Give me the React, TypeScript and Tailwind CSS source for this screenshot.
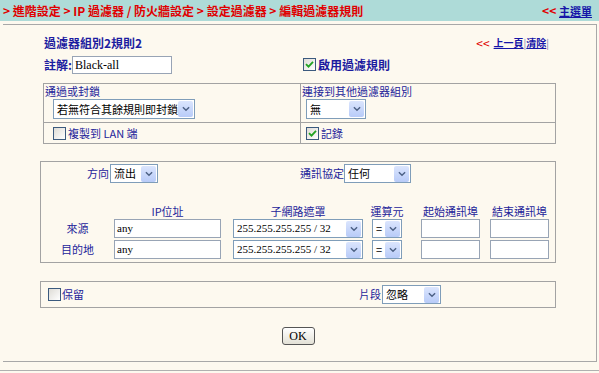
import type { ReactNode } from "react";

const CJK = "font-['Noto_Sans_CJK_TC','Noto_Sans',sans-serif]";
const SERIF = "font-['Liberation_Serif',serif]";

function Check({ checked }: { checked?: boolean }) {
  return (
    <span className="inline-flex h-[13px] w-[13px] shrink-0 items-center justify-center border border-[#3b5a7e] bg-gradient-to-br from-[#dedcd6] to-white">
      {checked && (
        <svg viewBox="0 0 9 9" className="h-[9px] w-[9px]">
          <path d="M1 4.2 L3.5 6.7 L8 1.8" stroke="#22a322" strokeWidth="1.8" fill="none" />
        </svg>
      )}
    </span>
  );
}

function Arrow() {
  return (
    <span className="ml-auto flex h-[16px] w-[15px] shrink-0 items-center justify-center rounded-[2px] bg-gradient-to-b from-[#dbe5fd] to-[#b8cbf8]">
      <svg viewBox="0 0 9 6" className="h-[6px] w-[8px]">
        <path d="M1 1 L4.5 4.5 L8 1" stroke="#4d6185" strokeWidth="1.6" fill="none" />
      </svg>
    </span>
  );
}

function Select({ className, children, serif }: { className: string; children: ReactNode; serif?: boolean }) {
  return (
    <div
      className={`flex shrink-0 items-center border border-[#7f9db9] bg-white pl-[3px] pr-[1px] text-[11px] text-black ${
        serif ? SERIF : CJK
      } ${className}`}
    >
      <span className="whitespace-nowrap leading-none">{children}</span>
      <Arrow />
    </div>
  );
}

function TextBox({ className, value }: { className: string; value?: string }) {
  return (
    <div
      className={`flex shrink-0 items-center border border-[#98a4b5] bg-white pl-[2px] text-[11px] leading-none text-black ${SERIF} ${className}`}
    >
      {value}
    </div>
  );
}

const cols = ["w-[73px]", "w-[107px]", "w-[130px]", "w-[30px]", "w-[59px]", "w-[59px]"];
const gaps = ["", "", "ml-[12px]", "ml-[9px]", "ml-[19px]", "ml-[10px]"];

export default function App() {
  return (
    <div className={`h-[373px] w-[599px] overflow-hidden bg-[#fdf9ef] ${CJK}`}>
      {/* breadcrumb bar */}
      <div className="flex h-[21px] items-center justify-between bg-[#aedbd8] pl-[3px] pr-[7px] text-[12px] font-bold leading-none">
        <span className="whitespace-nowrap text-[#e00000]">
          &gt; 進階設定 &gt; IP 過濾器 / 防火牆設定 &gt; 設定過濾器 &gt; 編輯過濾器規則
        </span>
        <span className="whitespace-nowrap">
          <span className="text-[#e00000]">&lt;&lt; </span>
          <span className="text-[11px] text-[#1515a8] underline">主選單</span>
        </span>
      </div>

      <div className="ml-[3px] mt-[3px] h-[338px] w-[594px] border-b border-r border-t border-[#a8a8a8]">
        <div className="ml-[37px] w-[516px]">
          {/* title */}
          <div className="mt-[11px] flex h-[14px] items-center justify-between pl-[4px] pr-[7px]">
            <span className="text-[12px] font-bold leading-none text-[#1c1ca0]">過濾器組別2規則2</span>
            <span className="flex items-center whitespace-nowrap text-[10px] font-bold leading-none">
              <span className="mr-[4px] text-[12px] font-normal text-[#e00000]">&lt;&lt;</span>
              <span className="text-[#1515a8] underline">上一頁</span>
              <span className="font-normal text-[#7a7ab0]">|</span>
              <span className="text-[#1515a8] underline">清除</span>
              <span className="font-normal text-[#7a7ab0]">|</span>
            </span>
          </div>

          {/* note + enable */}
          <div className="mt-[5px] flex h-[19px] items-center">
            <div className="flex w-[263px] items-center pl-[4px]">
              <span className="w-[28px] text-[12px] font-bold leading-none text-[#1c1ca0]">註解:</span>
              <TextBox className="h-[18px] w-[100px] text-[12px]" value="Black-all" />
            </div>
            <div className="flex items-center gap-[2px]">
              <Check checked />
              <span className="text-[12px] font-bold leading-none text-[#1c1ca0]">啟用過濾規則</span>
            </div>
          </div>

          {/* table 1 */}
          <div className="ml-[3px] mt-[9px] grid w-[513px] grid-cols-[257px_1fr] border-l border-t border-[#a3a3a3] text-[11px] leading-none text-[#24249a]">
            <div className="h-[39px] border-b border-r border-[#a3a3a3] pl-[1px] pt-[2px]">
              <div>通過或封鎖</div>
              <div className="mt-[2px] pl-[8px]">
                <Select className="h-[20px] w-[142px]">若無符合其餘規則即封鎖</Select>
              </div>
            </div>
            <div className="h-[39px] border-b border-r border-[#a3a3a3] pl-[1px] pt-[2px]">
              <div>連接到其他過濾器組別</div>
              <div className="mt-[2px] pl-[4px]">
                <Select className="h-[20px] w-[60px]">無</Select>
              </div>
            </div>
            <div className="flex h-[21px] items-center gap-[2px] border-b border-r border-[#a3a3a3] pl-[9px]">
              <Check />
              <span>複製到 LAN 端</span>
            </div>
            <div className="flex h-[21px] items-center gap-[2px] border-b border-r border-[#a3a3a3] pl-[5px]">
              <Check checked />
              <span>記錄</span>
            </div>
          </div>

          {/* table 2 */}
          <div className="mt-[17px] h-[102px] w-[516px] border border-[#a3a3a3] text-[11px] leading-none text-[#24249a]">
            <div className="mt-[2px] flex items-center">
              <span className="w-[68px] text-right">方向</span>
              <Select className="ml-[1px] h-[19px] w-[48px]">流出</Select>
              <span className="ml-[142px] w-[44px]">通訊協定</span>
              <Select className="h-[19px] w-[67px]">任何</Select>
            </div>
            <div className="mt-[19px] flex h-[15px] items-end">
              {["", "IP位址", "子網路遮罩", "運算元", "起始通訊埠", "結束通訊埠"].map((h, i) => (
                <span key={i} className={`flex shrink-0 justify-center whitespace-nowrap ${cols[i]} ${gaps[i]}`}>
                  {h}
                </span>
              ))}
            </div>
            {["來源", "目的地"].map((label) => (
              <div key={label} className="mt-[2px] flex h-[19px] items-center">
                <span className="w-[73px] text-center">{label}</span>
                <TextBox className="h-[19px] w-[107px]" value="any" />
                <Select serif className="ml-[12px] h-[19px] w-[130px]">
                  255.255.255.255 / 32
                </Select>
                <Select className="ml-[9px] h-[19px] w-[30px]">=</Select>
                <TextBox className="ml-[19px] h-[19px] w-[59px]" />
                <TextBox className="ml-[10px] h-[19px] w-[59px]" />
              </div>
            ))}
          </div>

          {/* table 3 */}
          <div className="mt-[18px] flex h-[27px] w-[516px] items-center border border-[#a3a3a3] pl-[7px] text-[11px] leading-none text-[#24249a]">
            <Check />
            <span className="ml-[1px]">保留</span>
            <span className="ml-[275px] w-[23px]">片段</span>
            <Select className="h-[19px] w-[59px]">忽略</Select>
          </div>

          {/* OK */}
          <div className="mt-[19px] flex justify-center">
            <button
              className={`flex h-[18px] w-[33px] items-center justify-center rounded-[3px] border border-[#555] bg-gradient-to-b from-white to-[#e3e1d6] text-[12px] leading-none text-black ${SERIF}`}
            >
              OK
            </button>
          </div>
        </div>
      </div>
      <div className="mt-[8px] h-px bg-[#b0b0b0]" />
    </div>
  );
}
